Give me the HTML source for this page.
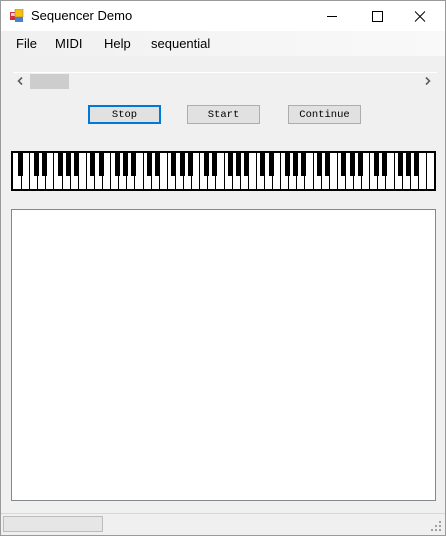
<!DOCTYPE html>
<html><head><meta charset="utf-8"><style>
*{margin:0;padding:0;box-sizing:border-box}
body{width:446px;height:536px;overflow:hidden;background:#f0f0f0;font-family:"Segoe UI","Liberation Sans",sans-serif;position:relative}
.win{position:absolute;left:0;top:0;width:446px;height:536px;border:1px solid #9a9a9a;border-top:none}
.title{position:absolute;left:0;top:0;width:446px;height:31px;background:#fff;border:1px solid #9a9a9a;border-bottom:none}
.title span{position:absolute;left:30px;top:7px;font-size:13px;color:#000}
.menu{position:absolute;left:1px;top:31px;width:444px;height:25px;background:linear-gradient(90deg,#f0f0f0,#f6f6f6 60%,#f9f9f9)}
.menu span{position:absolute;top:5px;font-size:13px;color:#000}
.btn{position:absolute;top:105px;width:73px;height:19px;background:#e1e1e1;border:1px solid #adadad;font-family:"Liberation Mono",monospace;font-size:10.5px;text-align:center;line-height:18px;color:#000}
.ta{position:absolute;left:11px;top:209px;width:425px;height:292px;background:#fff;border:1px solid #828790}
</style></head><body>
<div class="win"></div>
<div class="title">
<svg style="position:absolute;left:9px;top:8px" width="14" height="14"><rect x="0" y="3" width="6" height="8" fill="#c33"/><rect x="1" y="4" width="4" height="3" fill="#fcc"/><rect x="5" y="0" width="8" height="8" fill="#f5c400" stroke="#a77" stroke-width="0.6"/><rect x="5" y="8" width="8" height="5" fill="#4a7fd4"/></svg>
<span>Sequencer Demo</span>
<svg style="position:absolute;left:320px;top:9px" width="110" height="14" stroke="#000" fill="none" stroke-width="1"><line x1="6" y1="6.5" x2="16" y2="6.5"/><rect x="51.5" y="1.5" width="10" height="10"/><path d="M94 1.5l10 10M104 1.5l-10 10"/></svg>
</div>
<div class="menu"><span style="left:15px">File</span><span style="left:54px">MIDI</span><span style="left:103px">Help</span><span style="left:150px">sequential</span></div>
<div style="position:absolute;left:13px;top:72px;width:424px;height:1px;background:#fff"></div>
<div style="position:absolute;left:30px;top:74px;width:39px;height:15px;background:#cdcdcd"></div>
<svg style="position:absolute;left:16px;top:76px" width="420" height="10" fill="none" stroke="#606060" stroke-width="1.6"><path d="M6 1.5L2.5 5 6 8.5"/><path d="M410 1.5L413.5 5 410 8.5"/></svg>
<div class="btn" style="left:88px;border:2px solid #0078d7;line-height:16px">Stop</div>
<div class="btn" style="left:187px">Start</div>
<div class="btn" style="left:288px">Continue</div>
<svg id="pn" style="position:absolute;left:11px;top:151px" width="425" height="40"></svg>
<div class="ta"></div>
<div style="position:absolute;left:1px;top:513px;width:444px;height:1px;background:#d7d7d7"></div>
<div style="position:absolute;left:3px;top:516px;width:100px;height:16px;background:#e6e6e6;border:1px solid #bcbcbc"></div>
<svg style="position:absolute;left:431px;top:521px" width="12" height="12" fill="#a0a0a0"><rect x="8" y="0" width="2" height="2"/><rect x="4" y="4" width="2" height="2"/><rect x="8" y="4" width="2" height="2"/><rect x="0" y="8" width="2" height="2"/><rect x="4" y="8" width="2" height="2"/><rect x="8" y="8" width="2" height="2"/></svg>
<script>
var s='<rect x="1" y="1" width="423" height="38" fill="#fff" stroke="#000" stroke-width="2"/>';
var w=421/52,x0=2;
var names=['A','B','C','D','E','F','G'];
for(var i=1;i<52;i++){var x=Math.round(x0+i*w);s+='<rect x="'+x+'" y="1" width="1" height="38" fill="#000"/>';}
for(var i=0;i<51;i++){var n=names[i%7];if(n=='B'||n=='E')continue;var bx=x0+(i+1)*w;s+='<rect x="'+Math.round(bx-3.5)+'" y="1" width="5" height="24" fill="#000"/>';}
document.getElementById('pn').innerHTML=s;
</script>
</body></html>
